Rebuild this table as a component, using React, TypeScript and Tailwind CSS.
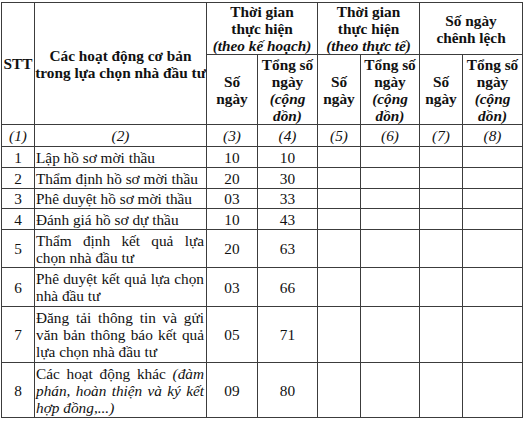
const rows = [
  { stt: "1", name: <>Lập hồ sơ mời thầu</>, days: "10", total: "10", h: "h-[21px]" },
  { stt: "2", name: <>Thẩm định hồ sơ mời thầu</>, days: "20", total: "30", h: "h-[21px]" },
  { stt: "3", name: <>Phê duyệt hồ sơ mời thầu</>, days: "03", total: "33", h: "h-[20px]" },
  { stt: "4", name: <>Đánh giá hồ sơ dự thầu</>, days: "10", total: "43", h: "h-[21px]" },
  {
    stt: "5",
    name: (
      <>
        <span className="block [text-align-last:justify]">Thẩm định kết quả lựa</span>
        chọn nhà đầu tư
      </>
    ),
    days: "20",
    total: "63",
    h: "h-[38px]",
  },
  { stt: "6", name: <>Phê duyệt kết quả lựa chọn nhà đầu tư</>, days: "03", total: "66", h: "h-[39px]" },
  {
    stt: "7",
    name: <>Đăng tải thông tin và gửi văn bản thông báo kết quả lựa chọn nhà đầu tư</>,
    days: "05",
    total: "71",
    h: "h-[56px]",
  },
  {
    stt: "8",
    name: (
      <>
        Các hoạt động khác <i>(đàm phán, hoàn thiện và ký kết hợp đồng,...)</i>
      </>
    ),
    days: "09",
    total: "80",
    h: "h-[55px]",
  },
];

const cell = "border border-[#3c3c3c] p-0 align-middle";

function TotalHead() {
  return (
    <th className={`${cell} text-center font-bold`}>
      Tổng số ngày <i>(cộng dồn)</i>
    </th>
  );
}

function DaysHead() {
  return <th className={`${cell} px-[4px] text-center font-bold`}>Số ngày</th>;
}

export default function App() {
  return (
    <div className="min-h-[423px] w-[527px] bg-white pl-px pt-[2px] font-['Liberation_Serif','Times_New_Roman',serif] text-[15.3px] leading-[17px] text-[#111]">
      <table className="w-[521px] table-fixed border-collapse">
        <colgroup>
          <col className="w-[33px]" />
          <col className="w-[172px]" />
          <col className="w-[51px]" />
          <col className="w-[60px]" />
          <col className="w-[43px]" />
          <col className="w-[59px]" />
          <col className="w-[43px]" />
          <col className="w-[60px]" />
        </colgroup>
        <thead>
          <tr className="h-[51px]">
            <th rowSpan={2} className={`${cell} text-center font-bold`}>
              STT
            </th>
            <th rowSpan={2} className={`${cell} text-center font-bold`}>
              Các hoạt động cơ bản trong lựa chọn nhà đầu tư
            </th>
            <th colSpan={2} className={`${cell} text-center font-bold`}>
              Thời gian
              <br />
              thực hiện
              <br />
              <i>(theo kế hoạch)</i>
            </th>
            <th colSpan={2} className={`${cell} text-center font-bold`}>
              Thời gian
              <br />
              thực hiện
              <br />
              <i>(theo thực tế)</i>
            </th>
            <th colSpan={2} className={`${cell} text-center font-bold`}>
              Số ngày
              <br />
              chênh lệch
            </th>
          </tr>
          <tr className="h-[70px]">
            <DaysHead />
            <TotalHead />
            <DaysHead />
            <TotalHead />
            <DaysHead />
            <TotalHead />
          </tr>
        </thead>
        <tbody>
          <tr className="h-[22px] text-center italic">
            {["(1)", "(2)", "(3)", "(4)", "(5)", "(6)", "(7)", "(8)"].map((n) => (
              <td key={n} className={cell}>
                {n}
              </td>
            ))}
          </tr>
          {rows.map((r) => (
            <tr key={r.stt} className={r.h}>
              <td className={`${cell} text-center`}>{r.stt}</td>
              <td className={`${cell} pl-px pr-[2px] text-justify`}>{r.name}</td>
              <td className={`${cell} text-center`}>{r.days}</td>
              <td className={`${cell} text-center`}>{r.total}</td>
              <td className={cell} />
              <td className={cell} />
              <td className={cell} />
              <td className={cell} />
            </tr>
          ))}
        </tbody>
      </table>
    </div>
  );
}
